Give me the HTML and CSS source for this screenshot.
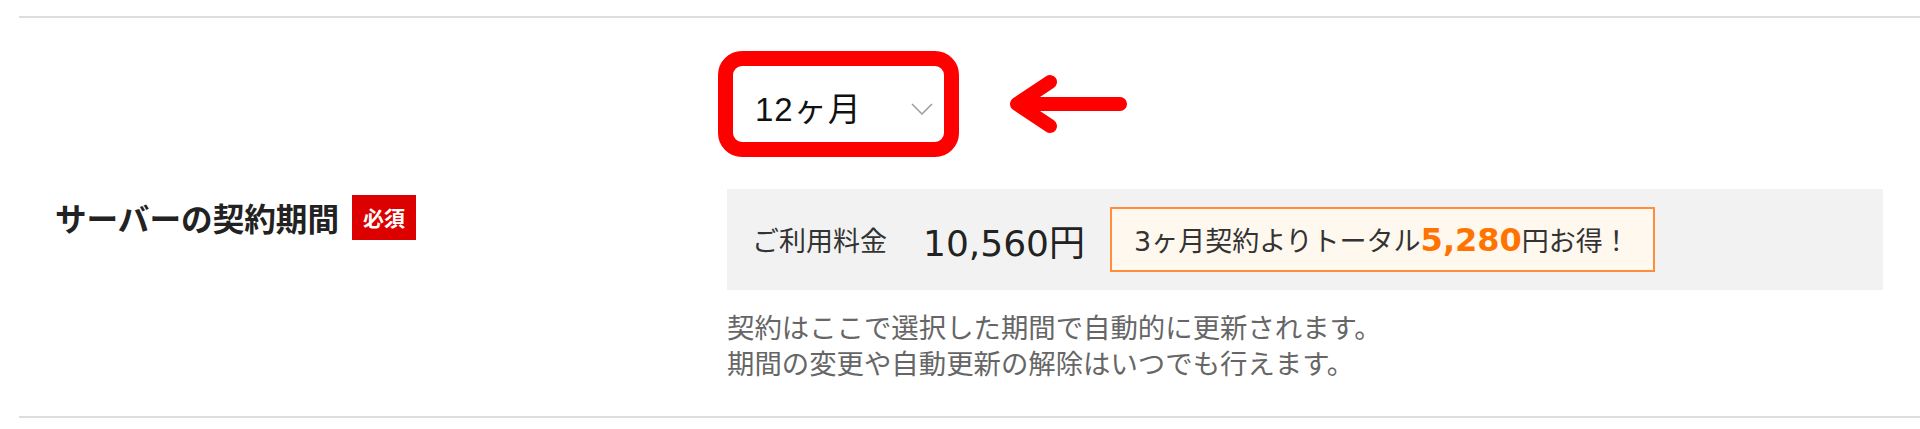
FILE: index.html
```html
<!DOCTYPE html>
<html lang="ja">
<head>
<meta charset="utf-8">
<title>サーバーの契約期間</title>
<link rel="stylesheet" href="styles.css">
</head>
<body>
<div class="row">
  <div class="label-col">
    <span class="label">サーバーの契約期間</span>
    <span class="badge">必須</span>
  </div>
  <div class="content">
    <div class="select-line">
      <div class="select">
        <span class="select-value">12ヶ月</span>
        <svg class="chevron" width="22" height="12" viewBox="0 0 22 12"><path d="M1 1 L11 11 L21 1" fill="none" stroke="#a0a0a0" stroke-width="1.6"/></svg>
        <span class="highlight"></span>
      </div>
      <svg class="arrow" width="131" height="72" viewBox="0 0 131 72"><path d="M117 36 H14 M47 14 L14 36 L47 58" fill="none" stroke="#ff0000" stroke-width="14" stroke-linecap="round" stroke-linejoin="round"/></svg>
    </div>
    <div class="price-panel">
      <span class="price-label">ご利用料金</span>
      <span class="price">10,560円</span>
      <span class="deal">3ヶ月契約よりトータル<strong class="deal-amount">5,280</strong>円お得！</span>
    </div>
    <p class="note">契約はここで選択した期間で自動的に更新されます。<br>期間の変更や自動更新の解除はいつでも行えます。</p>
  </div>
</div>
</body>
</html>
```
FILE: styles.css
```css
html, body {
  margin: 0;
  padding: 0;
  background: #ffffff;
}

body {
  font-family: "DejaVu Sans", "Noto Sans CJK JP", sans-serif;
  color: #333333;
}

.row {
  display: flex;
  margin-top: 16px;
  margin-left: 19px;
  border-top: 2px solid #dddddd;
  border-bottom: 2px solid #dddddd;
}

.label-col {
  width: 708px;
  box-sizing: border-box;
  padding-left: 36px;
  display: flex;
  align-items: center;
}

.label {
  font-size: 31.6px;
  font-weight: 700;
  color: #222222;
  font-family: "Noto Sans CJK JP", sans-serif;
}

.badge {
  margin-left: 13px;
  width: 64px;
  height: 45px;
  display: flex;
  align-items: center;
  justify-content: center;
  background: #dd0000;
  color: #ffffff;
  font-size: 21px;
  font-weight: 700;
  font-family: "Noto Sans CJK JP", sans-serif;
}

.content {
  flex: 1;
  padding: 40px 37px 33px 0;
}

.select-line {
  display: flex;
  align-items: center;
}

.select {
  position: relative;
  width: 222px;
  height: 92px;
  box-sizing: border-box;
  border: 1px solid #cccccc;
  border-radius: 4px;
  display: flex;
  align-items: center;
  justify-content: space-between;
  padding: 0 15px 0 27px;
}

.select-value {
  font-family: "Liberation Sans", "Noto Sans CJK JP", sans-serif;
  font-size: 33px;
  letter-spacing: 1px;
  color: #111111;
  margin-top: 5px;
}

.chevron {
  margin-top: 10px;
}

.highlight {
  position: absolute;
  top: -8px;
  left: -10px;
  right: -11px;
  bottom: -8px;
  border: 15px solid #ff0000;
  border-radius: 24px;
}

.arrow {
  margin-left: 54px;
}

.price-panel {
  margin-top: 39px;
  height: 101px;
  display: flex;
  align-items: center;
  padding-left: 25px;
  background: #f2f2f2;
}

.price-label {
  font-size: 27px;
  color: #333333;
  margin-right: 36px;
}

.price {
  font-size: 36px;
  color: #222222;
  margin-right: 25px;
}

.deal {
  height: 65px;
  box-sizing: border-box;
  display: flex;
  align-items: center;
  padding: 0 23px 0 22px;
  border: 2px solid #ff8d3b;
  background: #fff8ee;
  font-size: 27px;
  color: #333333;
}

.deal-amount {
  font-size: 32px;
  font-weight: 700;
  color: #ff7300;
}

.note {
  margin: 21px 0 0;
  font-size: 27.4px;
  line-height: 36px;
  color: #666666;
}
```
